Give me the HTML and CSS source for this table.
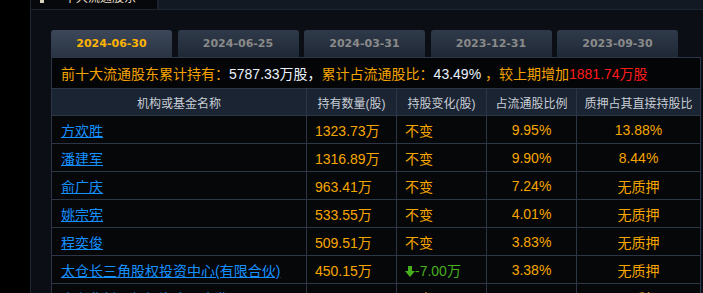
FILE: index.html
```html
<!DOCTYPE html>
<html lang="zh">
<head>
<meta charset="utf-8">
<title>十大流通股东</title>
<link rel="stylesheet" href="styles.css">
</head>
<body>
<div class="page">
  <div class="rail"></div>
  <div class="panel">
    <div class="panel-head">
      <div class="panel-tab"><span class="ico"></span><span class="panel-title">十大流通股东</span></div>
      <div class="panel-rest"></div>
    </div>
    <div class="panel-body">
      <div class="tabs">
        <div class="tab active">2024-06-30</div>
        <div class="tab">2024-06-25</div>
        <div class="tab">2024-03-31</div>
        <div class="tab">2023-12-31</div>
        <div class="tab">2023-09-30</div>
      </div>
      <table class="grid">
        <colgroup>
          <col class="c1"><col class="c2"><col class="c3"><col class="c4"><col class="c5">
        </colgroup>
        <tr class="sum">
          <td colspan="5"><span class="or">前十大流通股东累计持有：</span><span class="wh">5787.33</span><span class="wh">万股，</span><span class="or">累计占流通股比：</span><span class="wh">43.49%</span><span class="or"> ，较上期增加</span><span class="rd">1881.74万股</span></td>
        </tr>
        <tr class="head">
          <th>机构或基金名称</th><th>持有数量(股)</th><th>持股变化(股)</th><th>占流通股比例</th><th>质押占其直接持股比</th>
        </tr>
        <tr>
          <td class="name"><a href="#">方欢胜</a></td><td class="val">1323.73万</td><td class="val">不变</td><td class="val ctr">9.95%</td><td class="val ctr">13.88%</td>
        </tr>
        <tr>
          <td class="name"><a href="#">潘建军</a></td><td class="val">1316.89万</td><td class="val">不变</td><td class="val ctr">9.90%</td><td class="val ctr">8.44%</td>
        </tr>
        <tr>
          <td class="name"><a href="#">俞广庆</a></td><td class="val">963.41万</td><td class="val">不变</td><td class="val ctr">7.24%</td><td class="val ctr">无质押</td>
        </tr>
        <tr>
          <td class="name"><a href="#">姚宗宪</a></td><td class="val">533.55万</td><td class="val">不变</td><td class="val ctr">4.01%</td><td class="val ctr">无质押</td>
        </tr>
        <tr>
          <td class="name"><a href="#">程奕俊</a></td><td class="val">509.51万</td><td class="val">不变</td><td class="val ctr">3.83%</td><td class="val ctr">无质押</td>
        </tr>
        <tr>
          <td class="name"><a href="#">太仓长三角股权投资中心(有限合伙)</a></td><td class="val">450.15万</td><td class="val down"><svg class="arrow" width="10" height="11" viewBox="0 0 10 11"><rect x="3" y="0" width="4" height="6" fill="#46b01c"/><polygon points="0,5 10,5 5,11" fill="#46b01c"/></svg>-7.00万</td><td class="val ctr">3.38%</td><td class="val ctr">无质押</td>
        </tr>
        <tr>
          <td class="name"><a href="#">嘉兴华杉股权投资合伙企业</a></td><td class="val">427.68万</td><td class="val">不变</td><td class="val ctr">3.21%</td><td class="val ctr">无质押</td>
        </tr>
      </table>
    </div>
  </div>
</div>
</body>
</html>
```
FILE: styles.css
```css
html, body {
  margin: 0;
  padding: 0;
  height: 293px;
  overflow: hidden;
  background: #000;
}
body {
  font-family: "Liberation Sans", "Noto Sans CJK SC", sans-serif;
}
.page {
  display: flex;
  height: 293px;
}
.rail {
  width: 30px;
  flex: none;
  background: #000;
}
.panel {
  flex: 1;
  background: #0b0f15;
  border-left: 1px solid #1f2631;
  display: flex;
  flex-direction: column;
  min-width: 0;
}
.panel-head {
  display: flex;
  height: 9px;
  flex: none;
  border-bottom: 1px solid #1f2631;
}
.panel-tab {
  width: 126px;
  flex: none;
  background: #06080b;
  border-right: 2px solid #1c232d;
  overflow: hidden;
  display: flex;
  align-items: flex-start;
  color: #e4dcc6;
  font-size: 12px;
  line-height: 12px;
}
.ico {
  width: 4px;
  height: 3px;
  background: #d9d2bc;
  margin-left: 9px;
  flex: none;
}
.panel-title {
  margin-left: 20px;
  margin-top: -8px;
  white-space: nowrap;
}
.panel-rest {
  flex: 1;
  background: #121923;
}
.panel-body {
  padding: 20px 3px 0 20px;
}
.tabs {
  display: flex;
  gap: 5.5px;
  height: 27px;
}
.tab {
  width: 121px;
  flex: none;
  border-radius: 3px 3px 0 0;
  background: linear-gradient(#2f3a4a, #1f2835);
  color: #8a8a8a;
  font: bold 11px "DejaVu Sans", sans-serif;
  display: flex;
  align-items: center;
  justify-content: center;
}
.tab.active {
  background: linear-gradient(#3c4759, #2a3444);
  color: #ffb400;
}
.grid {
  border-collapse: collapse;
  table-layout: fixed;
  width: 650px;
  background: #050709;
}
.grid td, .grid th {
  border: 1px solid #2c3646;
  padding: 0;
  white-space: nowrap;
  overflow: hidden;
}
.c1 { width: 255px; }
.c2 { width: 90px; }
.c3 { width: 90px; }
.c4 { width: 90px; }
.c5 { width: 124px; }
.sum td {
  height: 30px;
  padding-left: 9px;
  font-size: 14px;
  background: #040506;
}
.or { color: #f5a300; }
.wh { color: #eaf2ff; }
.rd { color: #ff1a1a; }
.head th {
  height: 26px;
  background: #1b2432;
  color: #c9ced6;
  font-size: 12px;
  font-weight: normal;
  text-align: center;
}
.grid tr td.name, .grid tr td.val {
  height: 27px;
  font-size: 14px;
}
.grid td.name {
  padding-left: 9px;
}
.name a {
  color: #1590ff;
  text-decoration: underline;
}
.val {
  color: #f7a600;
}
.grid td.val {
  padding-left: 8px;
}
.grid td.ctr {
  text-align: center;
  padding-left: 0;
}
.grid td.down {
  color: #46b01c;
}
.arrow {
  vertical-align: -1px;
}
```
